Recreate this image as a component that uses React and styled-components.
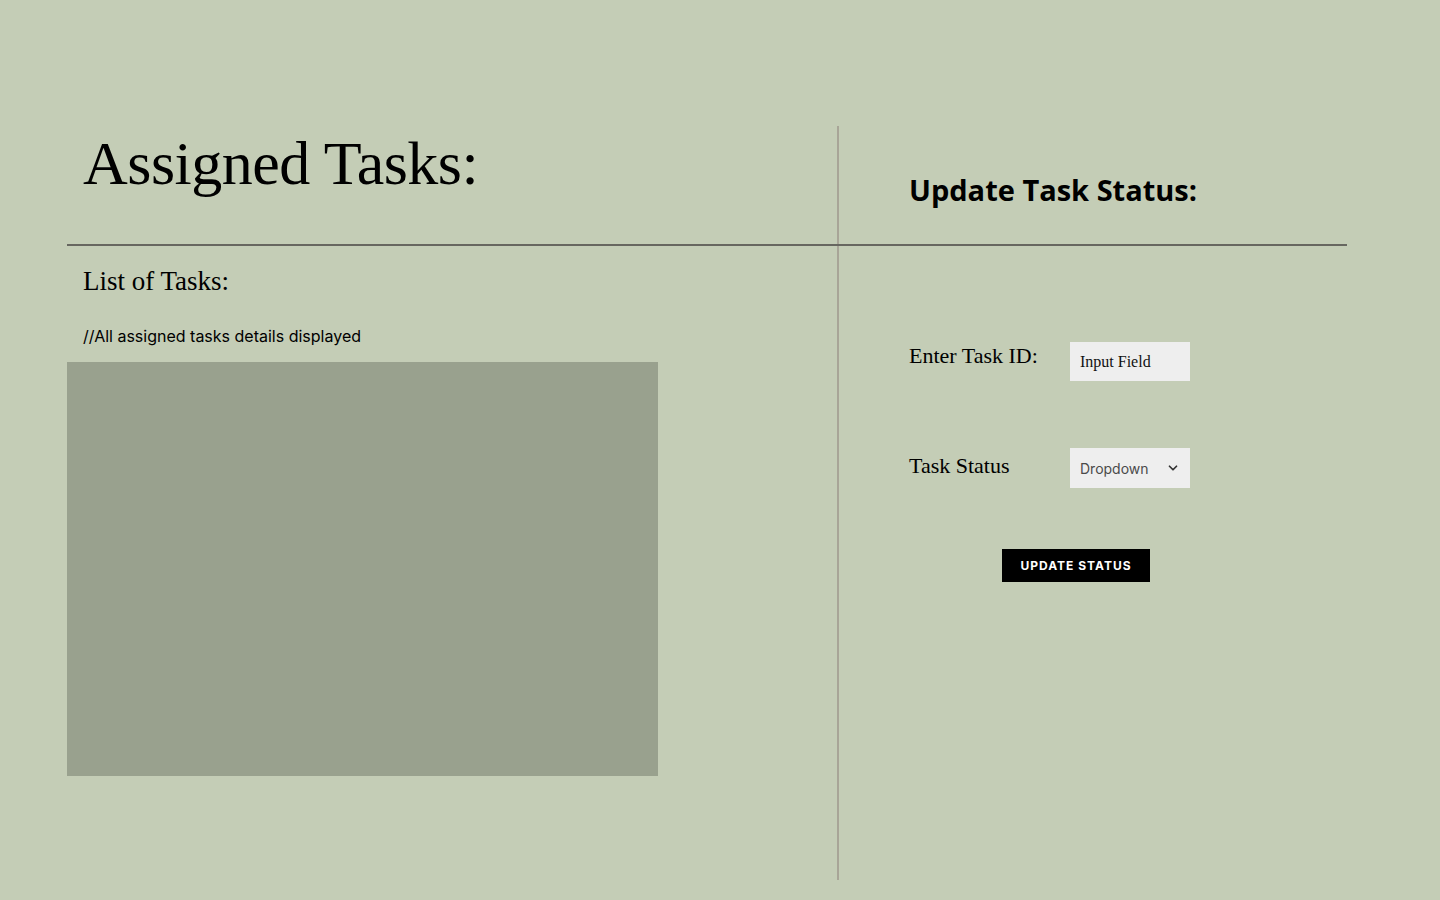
import styled, { createGlobalStyle } from 'styled-components';

const GlobalStyle = createGlobalStyle`
  html, body {
    margin: 0;
    padding: 0;
    background: #c4cdb6;
  }
  * {
    box-sizing: border-box;
  }
`;

const Page = styled.div`
  min-height: 900px;
  padding: 126px 0 0 67px;
  background: #c4cdb6;
  font-family: 'Liberation Serif', serif;
  color: #000;
`;

const Board = styled.div`
  display: grid;
  width: 1280px;
  grid-template-columns: 770px 2px 508px;
  grid-template-rows: 118px 2px 634px;
`;

const VerticalRule = styled.div`
  grid-column: 2;
  grid-row: 1 / 4;
  background: #a8a597;
`;

const HorizontalRule = styled.div`
  grid-column: 1 / 4;
  grid-row: 2;
  background: #676760;
`;

const LeftHeader = styled.div`
  grid-column: 1;
  grid-row: 1;
  padding: 2px 0 0 16px;
`;

const RightHeader = styled.div`
  grid-column: 3;
  grid-row: 1;
  padding: 44px 0 0 70px;
`;

const PageTitle = styled.h1`
  margin: 0;
  font-family: 'Liberation Serif', serif;
  font-weight: 400;
  font-size: 62px;
  line-height: 70px;
  letter-spacing: -0.5px;
`;

const SectionTitle = styled.h2`
  margin: 0;
  font-family: 'Open Sans', sans-serif;
  font-weight: 700;
  font-size: 29px;
  line-height: 40px;
`;

const LeftBody = styled.div`
  grid-column: 1;
  grid-row: 3;
  display: flex;
  flex-direction: column;
`;

const ListTitle = styled.h3`
  margin: 18px 0 0 16px;
  font-family: 'Liberation Serif', serif;
  font-weight: 400;
  font-size: 27px;
  line-height: 34px;
`;

const Note = styled.p`
  margin: 28px 0 0 16px;
  font-family: Inter, sans-serif;
  font-size: 16px;
  line-height: 20px;
`;

const TaskPanel = styled.div`
  width: 591px;
  height: 414px;
  margin-top: 16px;
  background: #99a18e;
`;

const RightBody = styled.div`
  grid-column: 3;
  grid-row: 3;
  padding: 96px 0 0 70px;
  display: flex;
  flex-direction: column;
`;

const FormRow = styled.div`
  display: grid;
  grid-template-columns: 161px 120px;
  align-items: center;
  margin-bottom: ${({ $gap }) => $gap}px;
`;

const Label = styled.label`
  font-family: 'Liberation Serif', serif;
  font-size: 22px;
  line-height: 28px;
  margin-top: ${({ $lift }) => -$lift}px;
`;

const TextInput = styled.input`
  width: 120px;
  height: 39px;
  border: none;
  outline: none;
  padding: 0 10px;
  background: #eeeeee;
  font-family: 'Liberation Serif', serif;
  font-size: 16px;
  color: #111;

  &::placeholder {
    color: #111;
  }
`;

const SelectBox = styled.div`
  width: 120px;
  height: 40px;
  display: flex;
  align-items: center;
  justify-content: space-between;
  padding: 0 10px 0 10px;
  background: #eeeeee;
  font-family: Inter, sans-serif;
  font-size: 14px;
  color: #4a4a4a;
`;

const SubmitButton = styled.button`
  align-self: flex-start;
  margin-left: 93px;
  width: 148px;
  height: 33px;
  border: none;
  background: #000;
  color: #fff;
  font-family: Inter, sans-serif;
  font-weight: 700;
  font-size: 12px;
  letter-spacing: 1px;
  cursor: pointer;
`;

const Chevron = () => (
  <svg width="14" height="14" viewBox="0 0 24 24" fill="none" stroke="#333" strokeWidth="3" strokeLinecap="round" strokeLinejoin="round">
    <path d="M6 9l6 6 6-6" />
  </svg>
);

export default function App() {
  return (
    <>
      <GlobalStyle />
      <Page>
        <Board>
          <LeftHeader>
            <PageTitle>Assigned Tasks:</PageTitle>
          </LeftHeader>
          <VerticalRule />
          <RightHeader>
            <SectionTitle>Update Task Status:</SectionTitle>
          </RightHeader>
          <HorizontalRule />
          <LeftBody>
            <ListTitle>List of Tasks:</ListTitle>
            <Note>//All assigned tasks details displayed</Note>
            <TaskPanel />
          </LeftBody>
          <RightBody>
            <FormRow $gap={67}>
              <Label $lift={12}>Enter Task ID:</Label>
              <TextInput placeholder="Input Field" />
            </FormRow>
            <FormRow $gap={61}>
              <Label $lift={4}>Task Status</Label>
              <SelectBox>
                <span>Dropdown</span>
                <Chevron />
              </SelectBox>
            </FormRow>
            <SubmitButton>UPDATE STATUS</SubmitButton>
          </RightBody>
        </Board>
      </Page>
    </>
  );
}
